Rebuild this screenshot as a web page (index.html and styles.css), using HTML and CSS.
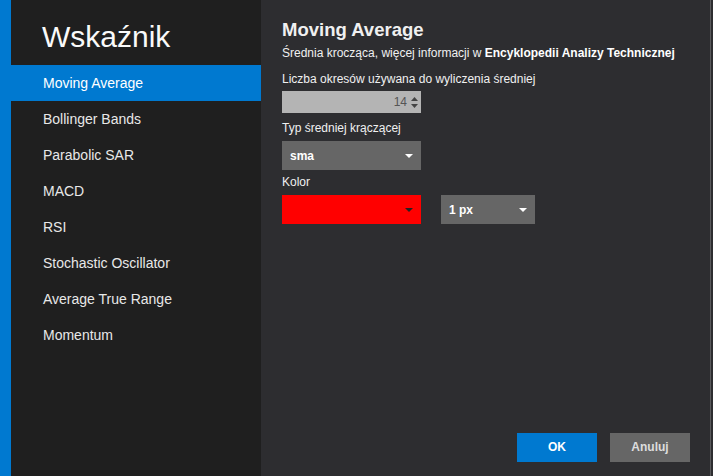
FILE: index.html
```html
<!DOCTYPE html>
<html lang="pl">
  <head>
    <meta charset="UTF-8" />
    <meta name="viewport" content="width=device-width, initial-scale=1.0" />
    <title>Wskaźnik</title>
    <link rel="stylesheet" href="styles.css">
  </head>

  <body>
    <div class="dialog">
      <div class="strip"></div>
      <div class="sidebar">
        <div class="title">Wskaźnik</div>
        <div class="item selected">Moving Average</div>
        <div class="item">Bollinger Bands</div>
        <div class="item">Parabolic SAR</div>
        <div class="item">MACD</div>
        <div class="item">RSI</div>
        <div class="item">Stochastic Oscillator</div>
        <div class="item">Average True Range</div>
        <div class="item">Momentum</div>
      </div>
      <div class="main">
        <div class="heading">Moving Average</div>
        <div class="desc">Średnia krocząca, więcej informacji w <b>Encyklopedii Analizy Technicznej</b></div>

        <div class="label first">Liczba okresów używana do wyliczenia średniej</div>
        <div class="number">
          <span>14</span>
          <span class="spin">
            <svg width="7" height="13" viewBox="0 0 7 13">
              <path d="M0 5 L3.5 1 L7 5 Z" fill="#444"/>
              <path d="M0 8 L3.5 12 L7 8 Z" fill="#444"/>
            </svg>
          </span>
        </div>

        <div class="label">Typ średniej krączącej</div>
        <div class="select wide">
          <span>sma</span>
          <span class="arrow"></span>
        </div>

        <div class="label">Kolor</div>
        <div class="row">
          <div class="select wide red">
            <span></span>
            <span class="arrow dark"></span>
          </div>
          <div class="select small">
            <span>1 px</span>
            <span class="arrow"></span>
          </div>
        </div>

        <div class="buttons">
          <div class="btn ok">OK</div>
          <div class="btn cancel">Anuluj</div>
        </div>
      </div>
    </div>
  </body>
</html>
```

FILE: styles.css
```css
* {
  box-sizing: border-box;
  padding: 0;
  margin: 0;
}
body {
  background: #2d2d30;
  height: 100vh;
  font-family: "Liberation Sans", Arial, sans-serif;
  color: #f0f0f0;
}
.dialog {
  display: flex;
  height: 476px;
  width: 713px;
}
.strip {
  width: 11px;
  background: #0079d0;
}
.sidebar {
  width: 250px;
  background: #1f1f1f;
}
.title {
  height: 65px;
  padding-left: 31px;
  padding-top: 19px;
  font-size: 30px;
  line-height: 36px;
  color: #fafafa;
}
.item {
  height: 36px;
  line-height: 36px;
  padding-left: 32px;
  font-size: 14px;
  color: #e8e8e8;
}
.item.selected {
  background: #0079d0;
  color: #fff;
}
.main {
  width: 450px;
  display: flex;
  flex-direction: column;
  padding: 19px 20px 14px 21px;
  border-right: 1px solid #5a5a5c;
}
.heading {
  font-size: 18.5px;
  font-weight: bold;
  line-height: 22px;
}
.desc {
  font-size: 12px;
  margin-top: 4px;
  line-height: 16px;
}
.desc b {
  color: #fff;
}
.label {
  font-size: 12px;
  line-height: 16px;
  margin-top: 4px;
  margin-bottom: 5px;
}
.label.first {
  margin-top: 10px;
  margin-bottom: 4px;
}
.number {
  width: 139px;
  height: 22px;
  background: #b4b4b4;
  color: #555;
  font-size: 12px;
  display: flex;
  justify-content: flex-end;
  align-items: center;
  padding-right: 3px;
  margin-bottom: 3px;
}
.spin {
  display: flex;
  margin-left: 4px;
}
.row {
  display: flex;
  gap: 20px;
}
.select {
  height: 29px;
  background: #666;
  display: flex;
  align-items: center;
  justify-content: space-between;
  padding: 0 8px 0 8px;
  font-size: 12px;
  font-weight: bold;
  color: #fff;
}
.select.wide {
  width: 139px;
}
.select.small {
  width: 94px;
}
.select.red {
  background: #ff0000;
}
.arrow {
  width: 0;
  height: 0;
  border-left: 4px solid transparent;
  border-right: 4px solid transparent;
  border-top: 4px solid #fff;
}
.arrow.dark {
  border-top-color: #222;
}
.buttons {
  margin-top: auto;
  display: flex;
  justify-content: flex-end;
  gap: 13px;
}
.btn {
  width: 80px;
  height: 29px;
  line-height: 29px;
  text-align: center;
  font-size: 12px;
  font-weight: bold;
}
.ok {
  background: #0079d0;
  color: #fff;
}
.cancel {
  background: #666;
  color: #ddd;
}
```
